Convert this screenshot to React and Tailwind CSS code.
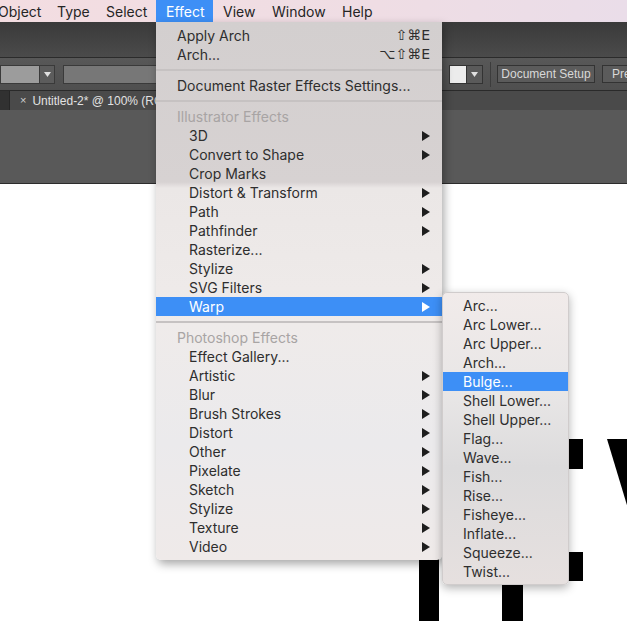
import React from 'react'

const menuFont = { fontFamily: 'Inter, "DejaVu Sans", sans-serif' }
const chromeFont = { fontFamily: '"Liberation Sans", "DejaVu Sans", sans-serif' }

const topMenus = [
  { label: 'Object', w: 'w-[59px] ml-[-12px]' },
  { label: 'Type', w: 'w-[49px]' },
  { label: 'Select', w: 'w-[60px]' },
  { label: 'Effect', w: 'w-[57px]' },
  { label: 'View', w: 'w-[49px]' },
  { label: 'Window', w: 'w-[70px]' },
  { label: 'Help', w: 'w-[50px]' },
]

const effectItems = [
  { label: 'Apply Arch', kind: 'top', shortcut: '⇧⌘E' },
  { label: 'Arch...', kind: 'top', shortcut: '⌥⇧⌘E' },
  { kind: 'sep' },
  { label: 'Document Raster Effects Settings...', kind: 'top' },
  { kind: 'sep' },
  { label: 'Illustrator Effects', kind: 'header' },
  { label: '3D', sub: true },
  { label: 'Convert to Shape', sub: true },
  { label: 'Crop Marks' },
  { label: 'Distort & Transform', sub: true },
  { label: 'Path', sub: true },
  { label: 'Pathfinder', sub: true },
  { label: 'Rasterize...' },
  { label: 'Stylize', sub: true },
  { label: 'SVG Filters', sub: true },
  { label: 'Warp', sub: true, active: true },
  { kind: 'sep' },
  { label: 'Photoshop Effects', kind: 'header' },
  { label: 'Effect Gallery...' },
  { label: 'Artistic', sub: true },
  { label: 'Blur', sub: true },
  { label: 'Brush Strokes', sub: true },
  { label: 'Distort', sub: true },
  { label: 'Other', sub: true },
  { label: 'Pixelate', sub: true },
  { label: 'Sketch', sub: true },
  { label: 'Stylize', sub: true },
  { label: 'Texture', sub: true },
  { label: 'Video', sub: true },
]

const warpItems = [
  'Arc...', 'Arc Lower...', 'Arc Upper...', 'Arch...', 'Bulge...', 'Shell Lower...',
  'Shell Upper...', 'Flag...', 'Wave...', 'Fish...', 'Rise...', 'Fisheye...',
  'Inflate...', 'Squeeze...', 'Twist...',
]

function Arrow({ white }) {
  return (
    <svg width="8" height="10" viewBox="0 0 8 10" className="shrink-0">
      <polygon points="0,0 8,5 0,10" fill={white ? '#ffffff' : '#1e1e1e'} />
    </svg>
  )
}

function DropArrow() {
  return (
    <svg width="7" height="5" viewBox="0 0 7 5">
      <polygon points="0,0 7,0 3.5,5" fill="#e0e0e0" />
    </svg>
  )
}

function EffectMenu() {
  return (
    <div
      className="absolute left-[156px] top-[22px] w-[286px] rounded-b-[5px] py-[4px] text-[14px] text-[#2e2e2e] shadow-[2px_4px_10px_rgba(0,0,0,0.35)] bg-[linear-gradient(to_bottom,#d3cfcf_0px,#d7d2d2_160px,#ebe7e6_166px,#efebea_300px,#ebeaec_420px,#efeae9_538px)]"
      style={menuFont}
    >
      {effectItems.map((it, i) => {
        if (it.kind === 'sep') {
          return (
            <div key={i} className="flex h-[12px] items-center">
              <div className="h-[2px] w-full bg-[#c6c2c2]" />
            </div>
          )
        }
        if (it.kind === 'header') {
          return (
            <div key={i} className="h-[19px] pl-[21px] leading-[19px] text-[#a8a4a4]">
              {it.label}
            </div>
          )
        }
        return (
          <div
            key={i}
            className={`flex h-[19px] items-center pr-[12px] leading-[19px] ${
              it.kind === 'top' ? 'pl-[21px]' : 'pl-[33px]'
            } ${it.active ? 'bg-[#3d8ff6] text-white' : ''}`}
          >
            <span className="flex-1">{it.label}</span>
            {it.shortcut && (
              <span className="text-[14px]" style={{ fontFamily: '"DejaVu Sans", sans-serif' }}>
                {it.shortcut}
              </span>
            )}
            {it.sub && <Arrow white={it.active} />}
          </div>
        )
      })}
    </div>
  )
}

function WarpMenu() {
  return (
    <div
      className="absolute left-[442px] top-[292px] w-[127px] rounded-[5px] border border-[#d0cccc] py-[3px] text-[14px] text-[#2e2e2e] shadow-[0_3px_10px_rgba(0,0,0,0.3)] bg-[linear-gradient(to_bottom,#f1ebea_0%,#e8e6e6_35%,#dcdbdc_60%,#e6e0df_100%)]"
      style={menuFont}
    >
      {warpItems.map((w) => (
        <div
          key={w}
          className={`h-[19px] pl-[20px] leading-[19px] ${w === 'Bulge...' ? 'bg-[#3d8ff6] text-white' : ''}`}
        >
          {w}
        </div>
      ))}
    </div>
  )
}

export default function App() {
  return (
    <div className="relative flex h-[622px] w-[627px] flex-col overflow-hidden bg-white">
      {/* mac menu bar */}
      <div
        className="flex h-[22px] shrink-0 items-center bg-[linear-gradient(to_right,#f3dde1,#efdde4_60%,#eadde9)] text-[14px] text-[#252525]"
        style={menuFont}
      >
        {topMenus.map((m) => (
          <div
            key={m.label}
            className={`flex h-[22px] shrink-0 items-center pl-[10px] ${m.w} ${
              m.label === 'Effect' ? 'bg-[#3d8ff6] text-white' : ''
            }`}
          >
            {m.label}
          </div>
        ))}
      </div>

      {/* app chrome */}
      <div className="h-[36px] shrink-0 border-b border-[#2b2b2b] bg-gradient-to-b from-[#3a3a3a] to-[#4b4b4b]" />
      <div
        className="flex h-[33px] shrink-0 items-center border-b border-[#2a2a2a] bg-gradient-to-b from-[#585858] to-[#4f4f4f] text-[12px] text-[#d8d8d8]"
        style={chromeFont}
      >
        <div className="h-[19px] w-[40px] border border-[#3a3a3a] bg-[#9c9c9c]" />
        <div className="flex h-[19px] w-[15px] items-center justify-center border border-l-0 border-[#3a3a3a] bg-[#5c5c5c]">
          <DropArrow />
        </div>
        <div className="ml-[8px] h-[19px] w-[100px] border border-[#3a3a3a] bg-[#777777]" />
        <div className="flex-1" />
        <div className="h-[19px] w-[18px] border border-[#333] bg-[#ececec]" />
        <div className="flex h-[19px] w-[16px] items-center justify-center border border-l-0 border-[#333] bg-[#5a5a5a]">
          <DropArrow />
        </div>
        <div className="ml-[7px] h-[25px] w-px bg-[#3c3c3c]" />
        <div className="ml-[6px] flex h-[18px] w-[98px] items-center justify-center border border-[#333] bg-[#5b5b5b]">
          Document Setup
        </div>
        <div className="ml-[7px] flex h-[18px] w-[25px] items-center overflow-hidden whitespace-nowrap border border-r-0 border-[#333] bg-[#5b5b5b] pl-[9px]">
          Pre
        </div>
      </div>
      <div className="flex h-[19px] shrink-0 bg-[#313131]">
        <div className="w-[9px]" />
        <div
          className="flex flex-1 items-center border-l border-[#262626] bg-[#4a4a4a] pl-[10px] text-[12px] text-[#e2e2e2]"
          style={chromeFont}
        >
          <span className="mr-[6px] text-[11px] text-[#cfcfcf]">×</span>
          <span className="whitespace-nowrap">Untitled-2* @ 100% (RGB)</span>
        </div>
      </div>
      <div className="h-[74px] shrink-0 border-b border-[#2c2c2c] bg-[#595959]" />

      {/* artboard */}
      <div className="relative flex-1 bg-white">
        <svg className="absolute left-0 top-0" width="627" height="437" viewBox="0 0 627 437">
          <rect x="419" y="240" width="20" height="200" fill="#000" />
          <rect x="502" y="255" width="21" height="200" fill="#000" />
          <rect x="502" y="255" width="81" height="30" fill="#000" />
          <rect x="502" y="368" width="81" height="29" fill="#000" />
          <polygon points="607,255 645,255 700,437 662,437" fill="#000" />
        </svg>
      </div>

      <EffectMenu />
      <WarpMenu />
    </div>
  )
}
